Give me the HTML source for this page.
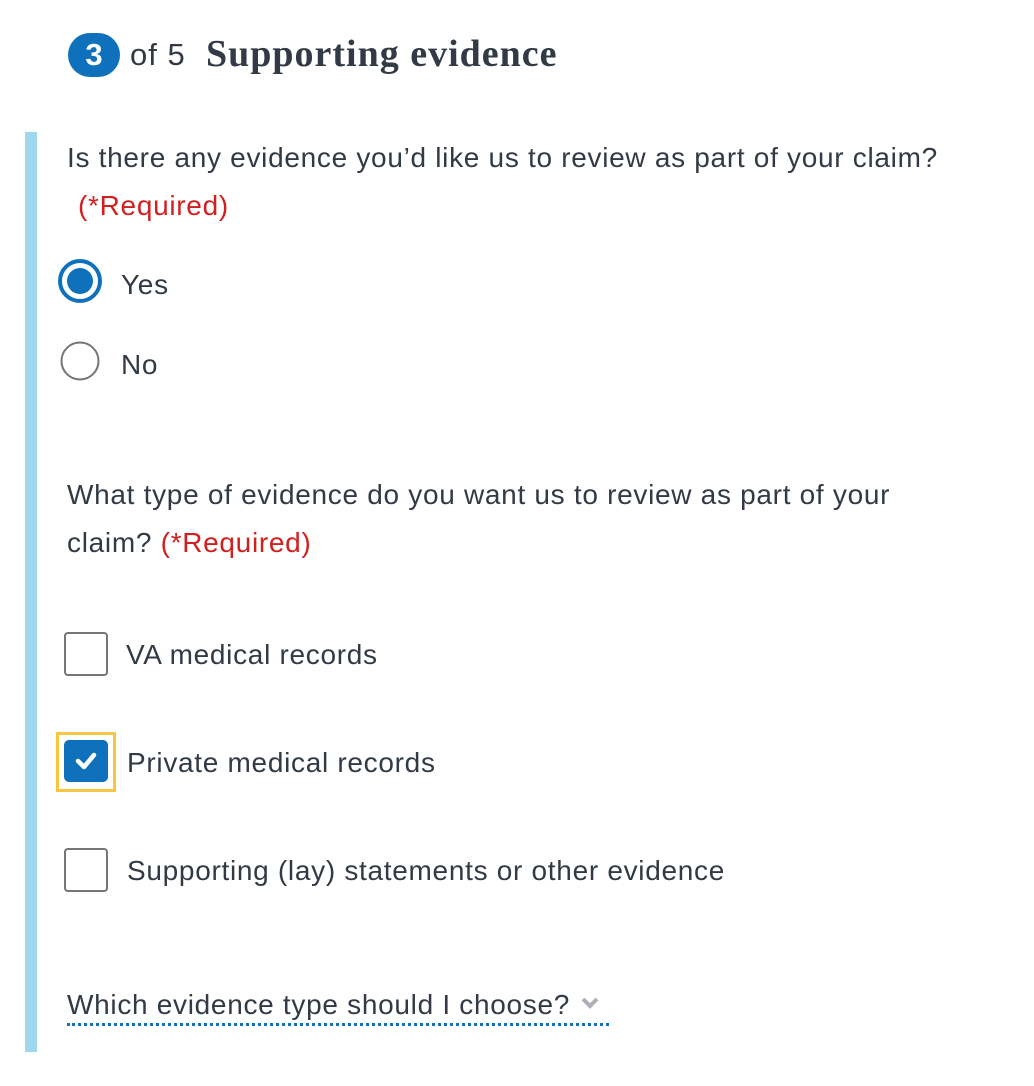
<!DOCTYPE html>
<html><head><meta charset="utf-8"><style>
body{margin:0;width:1034px;height:1086px;background:#fff;position:relative;font-family:"Liberation Sans",sans-serif;color:#323a45;overflow:hidden}
.a{position:absolute;white-space:nowrap;font-size:28px;line-height:32px;letter-spacing:0.7px}
.r{color:#d0201f}
.cb{position:absolute;left:64px;width:40px;height:40px;border:2px solid #757575;border-radius:4px;box-sizing:content-box}
</style></head><body>
<div style="position:absolute;left:68px;top:33px;width:52px;height:44px;border-radius:22px;background:#0f71bb;color:#fff;font-weight:bold;font-size:31px;line-height:44px;text-align:center">3</div>
<div class="a" style="left:130px;top:37px;font-size:31px;line-height:36px;letter-spacing:1px">of 5</div>
<div class="a" style="left:206px;top:34px;font-family:'Liberation Serif',serif;font-weight:bold;font-size:38px;line-height:40px;letter-spacing:1px">Supporting evidence</div>
<div style="position:absolute;left:25px;top:132px;width:12px;height:920px;background:#9ed8ee"></div>
<div class="a" style="left:67px;top:142px">Is there any evidence you’d like us to review as part of your claim?</div>
<div class="a r" style="left:78px;top:190px">(*Required)</div>
<svg style="position:absolute;left:56px;top:257px" width="48" height="48"><circle cx="24" cy="24" r="20" fill="none" stroke="#0f71bb" stroke-width="4"/><circle cx="24" cy="24" r="13" fill="#0f71bb"/></svg>
<div class="a" style="left:121px;top:269px">Yes</div>
<svg style="position:absolute;left:56px;top:337px" width="48" height="48"><circle cx="24" cy="24" r="18.5" fill="#fff" stroke="#757575" stroke-width="2"/></svg>
<div class="a" style="left:121px;top:349px">No</div>
<div class="a" style="left:67px;top:479px">What type of evidence do you want us to review as part of your</div>
<div class="a" style="left:67px;top:527px">claim? <span class="r">(*Required)</span></div>
<div class="cb" style="top:632px"></div>
<div class="a" style="left:126px;top:639px">VA medical records</div>
<div style="position:absolute;left:56px;top:732px;width:54px;height:54px;border:3px solid #f9c642"></div>
<div style="position:absolute;left:64px;top:740px;width:44px;height:42px;background:#0f71bb;border-radius:5px"></div>
<svg style="position:absolute;left:64px;top:740px" width="44" height="42"><path d="M14 21 L20 27 L30 15" fill="none" stroke="#fff" stroke-width="4.5" stroke-linecap="round" stroke-linejoin="round"/></svg>
<div class="a" style="left:127px;top:747px">Private medical records</div>
<div class="cb" style="top:848px"></div>
<div class="a" style="left:127px;top:855px">Supporting (lay) statements or other evidence</div>
<div class="a" style="left:67px;top:989px">Which evidence type should I choose?</div>
<svg style="position:absolute;left:580px;top:996px" width="22" height="16"><path d="M3 3 L10 10 L17 3" fill="none" stroke="#aeb0b5" stroke-width="4"/></svg>
<div style="position:absolute;left:67px;top:1023px;width:542px;border-top:3px dotted #0f71bb"></div>
</body></html>
